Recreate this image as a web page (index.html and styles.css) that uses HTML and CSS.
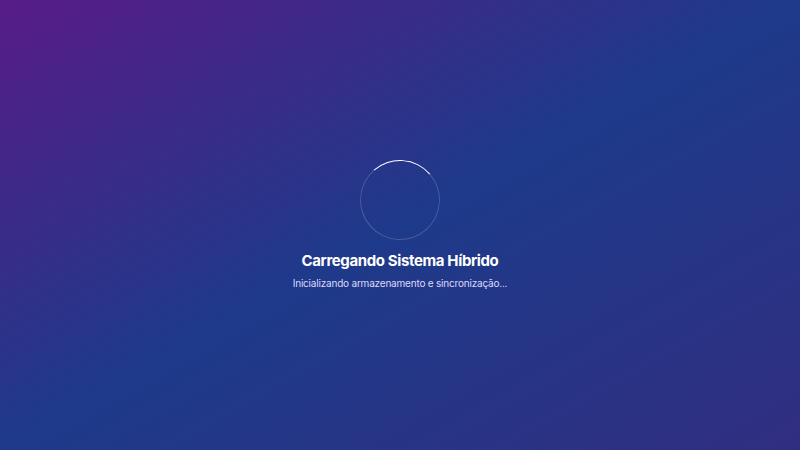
FILE: index.html
```html
<!DOCTYPE html>
<html lang="pt-BR">
<head>
<meta charset="utf-8">
<title>Carregando</title>
<link rel="stylesheet" href="styles.css">
</head>
<body>
<main class="screen">
  <div class="loader">
    <div class="spinner"></div>
    <h1 class="title">Carregando Sistema Híbrido</h1>
    <p class="subtitle">Inicializando armazenamento e sincronização...</p>
  </div>
</main>
</body>
</html>
```
FILE: styles.css
```css
html, body {
  margin: 0;
  padding: 0;
  height: 100%;
}
body {
  font-family: Inter, "Noto Sans", "Liberation Sans", sans-serif;
}
.screen {
  min-height: 100vh;
  display: flex;
  align-items: center;
  justify-content: center;
  background: linear-gradient(to bottom right, #581c87, #1e3a8a, #312e81);
}
.loader {
  display: flex;
  flex-direction: column;
  align-items: center;
  text-align: center;
}
.spinner {
  width: 80px;
  height: 80px;
  box-sizing: border-box;
  border-radius: 50%;
  border: 1px solid rgba(255, 255, 255, 0.18);
  border-top: 1.5px solid #ffffff;
  transform: rotate(4deg);
  margin-bottom: 9px;
}
.title {
  margin: 0;
  color: #ffffff;
  font-size: 15px;
  font-weight: 700;
  line-height: 24px;
  letter-spacing: -0.025em;
}
.subtitle {
  margin: 2px 0 0;
  color: #ddd8fd;
  font-size: 10px;
  line-height: 16px;
  letter-spacing: -0.02em;
}
```
